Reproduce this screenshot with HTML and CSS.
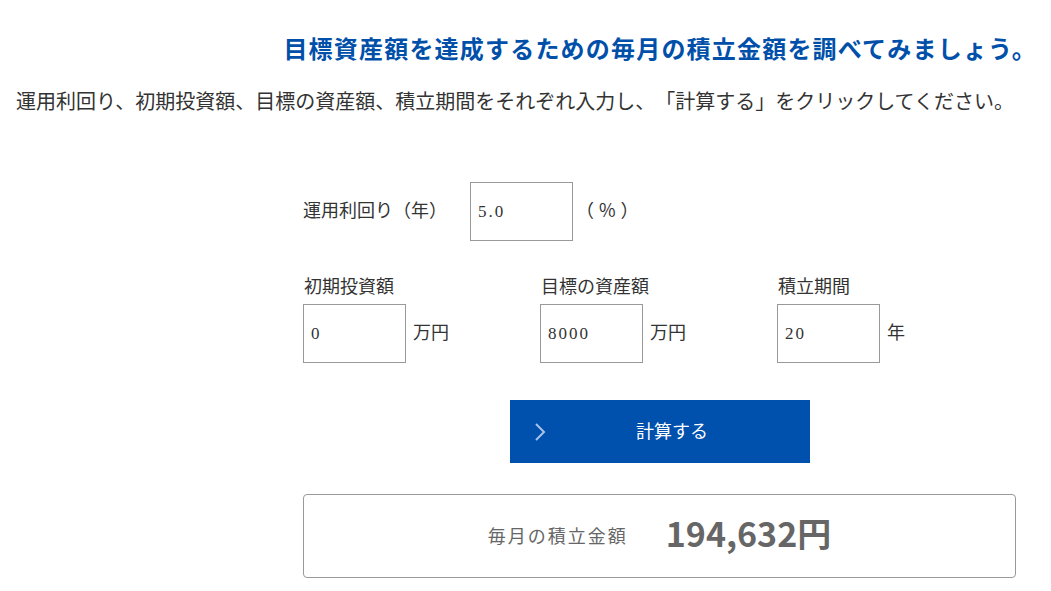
FILE: index.html
```html
<!DOCTYPE html>
<html lang="ja">
<head>
  <meta charset="UTF-8" />
  <title>毎月の積立金額シミュレーション</title>
  <link rel="stylesheet" href="styles.css">
</head>
<body>
  <div class="page">
    <h1 class="title">目標資産額を達成するための毎月の積立金額を調べてみましょう。</h1>
    <p class="lead">運用利回り、初期投資額、目標の資産額、積立期間をそれぞれ入力し、「計算する」をクリックしてください。</p>

    <div class="form">
      <div class="row-rate">
        <label class="rate-label" for="rate">運用利回り（年）</label>
        <input class="field" id="rate" type="text" value="5.0">
        <span class="unit-rate">（%）</span>
      </div>

      <div class="row-fields">
        <div class="col">
          <label class="col-label" for="initial">初期投資額</label>
          <div class="col-input">
            <input class="field" id="initial" type="text" value="0">
            <span class="unit">万円</span>
          </div>
        </div>
        <div class="col">
          <label class="col-label" for="target">目標の資産額</label>
          <div class="col-input">
            <input class="field" id="target" type="text" value="8000">
            <span class="unit">万円</span>
          </div>
        </div>
        <div class="col">
          <label class="col-label" for="years">積立期間</label>
          <div class="col-input">
            <input class="field" id="years" type="text" value="20">
            <span class="unit">年</span>
          </div>
        </div>
      </div>

      <button class="calc-btn" id="calcBtn">
        <svg class="chevron" width="12" height="20" viewBox="0 0 12 20">
          <polyline points="2,2 10,10 2,18" fill="none" stroke="#a9c3e8" stroke-width="2"/>
        </svg>
        計算する
      </button>

      <div class="result">
        <span class="result-label">毎月の積立金額</span>
        <span class="result-value" id="result">194,632円</span>
      </div>
    </div>
  </div>

  <script>
    const calcBtn = document.getElementById('calcBtn');
    const result = document.getElementById('result');

    function calculate() {
      const rate = parseFloat(document.getElementById('rate').value) / 100 / 12;
      const initial = parseFloat(document.getElementById('initial').value) * 10000;
      const target = parseFloat(document.getElementById('target').value) * 10000;
      const months = parseFloat(document.getElementById('years').value) * 12;
      if (isNaN(rate) || isNaN(initial) || isNaN(target) || !months) return;

      const grow = Math.pow(1 + rate, months);
      let monthly;
      if (rate === 0) {
        monthly = (target - initial) / months;
      } else {
        monthly = (target - initial * grow) * rate / (grow - 1);
      }
      if (monthly < 0) monthly = 0;
      result.textContent = Math.round(monthly).toLocaleString() + '円';
    }

    calcBtn.addEventListener('click', calculate);
  </script>
</body>
</html>
```

FILE: styles.css
```css
body {
  margin: 0;
  background: #fff;
  color: #333;
  font-family: "Noto Sans CJK JP", "Noto Sans", sans-serif;
  text-spacing-trim: space-all;
}
.page {
  padding: 0 28px 0 16px;
}
.title {
  margin: 34px -14px 0 0;
  text-align: right;
  font-size: 24px;
  line-height: 28px;
  letter-spacing: 1.2px;
  font-weight: bold;
  color: #0050aa;
}
.lead {
  margin: 25px 0 0;
  font-size: 20px;
  line-height: 28px;
  color: #333;
}
.form {
  margin: 67px 0 0 287px;
  width: 713px;
}
.row-rate {
  display: flex;
  align-items: center;
}
.rate-label {
  width: 167px;
  font-size: 18px;
  margin-bottom: 6px;
}
.field {
  box-sizing: border-box;
  width: 103px;
  height: 59px;
  border: 1px solid #999;
  padding: 0 7px;
  font-family: "Liberation Serif", serif;
  font-size: 17px;
  letter-spacing: 2px;
  color: #333;
  outline: none;
}
.unit-rate {
  margin-left: 3px;
  font-size: 18px;
  letter-spacing: 5px;
  margin-bottom: 6px;
}
.row-fields {
  display: flex;
  margin-top: 34px;
}
.col {
  width: 237px;
}
.col-label {
  display: block;
  font-size: 18px;
  line-height: 24px;
  margin-bottom: 5px;
  padding-left: 1px;
  position: relative;
  top: -2px;
}
.col-input {
  display: flex;
  align-items: center;
}
.unit {
  margin-left: 7px;
  font-size: 18px;
  margin-bottom: 6px;
}
.calc-btn {
  position: relative;
  display: block;
  margin: 37px 0 0 207px;
  width: 300px;
  height: 63px;
  padding: 0 0 4px 24px;
  border: none;
  background: #0050ad;
  color: #fff;
  font-family: "Noto Sans CJK JP", "Noto Sans", sans-serif;
  font-size: 18px;
  cursor: pointer;
}
.chevron {
  position: absolute;
  left: 24px;
  top: 22px;
}
.result {
  box-sizing: border-box;
  display: flex;
  justify-content: center;
  align-items: center;
  gap: 38px;
  margin-top: 31px;
  height: 84px;
  padding-bottom: 8px;
  border: 1px solid #999;
  border-radius: 4px;
  color: #666;
}
.result-label {
  font-size: 18px;
  letter-spacing: 2px;
  margin-top: 6px;
}
.result-value {
  font-size: 34px;
  font-weight: bold;
}
```
